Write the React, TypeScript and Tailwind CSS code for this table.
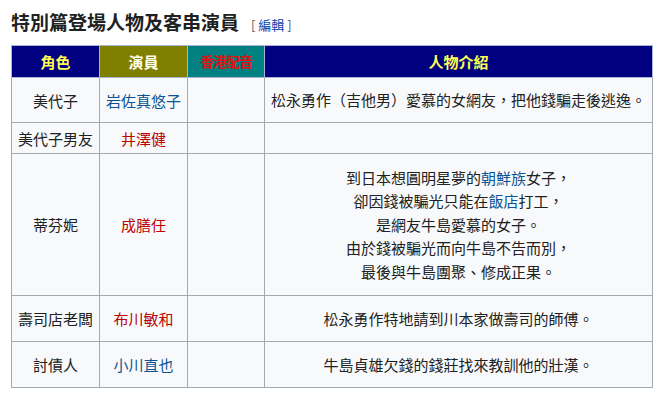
const cjk = { fontFamily: '"Noto Sans CJK TC", "Noto Sans", sans-serif' }

type Row = {
  role: string
  actor: string
  actorColor: 'blue' | 'red'
  h: string
  desc: React.ReactNode
}

const blue = 'text-[#0b5394]'
const red = 'text-[#ba0000]'

const rows: Row[] = [
  {
    role: '美代子',
    actor: '岩佐真悠子',
    actorColor: 'blue',
    h: 'h-[45px]',
    desc: '松永勇作（吉他男）愛慕的女網友，把他錢騙走後逃逸。',
  },
  { role: '美代子男友', actor: '井澤健', actorColor: 'red', h: 'h-[31px]', desc: null },
  {
    role: '蒂芬妮',
    actor: '成膳任',
    actorColor: 'red',
    h: 'h-[142px]',
    desc: (
      <>
        到日本想圓明星夢的<span className={blue}>朝鮮族</span>女子，
        <br />
        卻因錢被騙光只能在<span className={blue}>飯店</span>打工，
        <br />
        是網友牛島愛慕的女子。
        <br />
        由於錢被騙光而向牛島不告而別，
        <br />
        最後與牛島團聚、修成正果。
      </>
    ),
  },
  {
    role: '壽司店老闆',
    actor: '布川敏和',
    actorColor: 'red',
    h: 'h-[46px]',
    desc: '松永勇作特地請到川本家做壽司的師傅。',
  },
  {
    role: '討債人',
    actor: '小川直也',
    actorColor: 'blue',
    h: 'h-[46px]',
    desc: '牛島貞雄欠錢的錢莊找來教訓他的壯漢。',
  },
]

export default function App() {
  return (
    <div className="w-[662px] h-[398px] bg-white overflow-hidden" style={cjk}>
      <div className="flex items-baseline pl-[11px] pt-[9px] h-[45px]">
        <h3 className="text-[19px] font-bold text-[#202122] leading-[26px]">特別篇登場人物及客串演員</h3>
        <span className="ml-[12px] text-[13px] text-[#54595d]">
          [ <span className="text-[#0645ad]">編輯</span> ]
        </span>
      </div>
      <table className="ml-[11px] w-[642px] table-fixed border-collapse text-[15px] text-[#202122] leading-[23px]">
        <colgroup>
          <col className="w-[88px]" />
          <col className="w-[88px]" />
          <col className="w-[77px]" />
          <col />
        </colgroup>
        <thead>
          <tr className="h-[32px] font-bold text-[15px]">
            <th className="bg-[#000080] text-[#ffff55] border border-[#a8b4d0]">角色</th>
            <th className="bg-[#808000] text-[#fffff0] border border-[#a8b4d0]">演員</th>
            <th className="bg-[#008080] text-[#dd1111] border border-[#a8b4d0] text-[14px] tracking-[-1px]">香港配音</th>
            <th className="bg-[#000080] text-[#ffff55] border border-[#a8b4d0]">人物介紹</th>
          </tr>
        </thead>
        <tbody>
          {rows.map((r) => (
            <tr key={r.role} className={`${r.h} bg-[#f8f9fa]`}>
              <td className="border border-[#a2a9b1] text-center px-[4px]">{r.role}</td>
              <td className={`border border-[#a2a9b1] text-center ${r.actorColor === 'blue' ? blue : red}`}>
                {r.actor}
              </td>
              <td className="border border-[#a2a9b1]"></td>
              <td className="border border-[#a2a9b1] text-center leading-[23.5px]">{r.desc}</td>
            </tr>
          ))}
        </tbody>
      </table>
    </div>
  )
}
